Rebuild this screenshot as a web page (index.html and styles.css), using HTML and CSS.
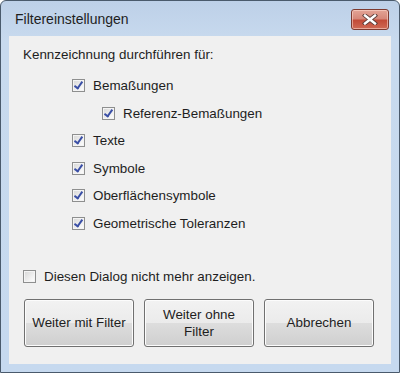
FILE: index.html
```html
<!DOCTYPE html>
<html lang="de">
<head>
    <meta charset="UTF-8">
    <title>Filtereinstellungen</title>
    <link rel="stylesheet" href="styles.css">
</head>
<body>
    <div class="window">
        <div class="titlebar">
            <span class="title">Filtereinstellungen</span>
            <button class="close" type="button">
                <svg width="16" height="11" viewBox="0 0 16 11">
                    <path d="M3 1.5 L13 9.5 M13 1.5 L3 9.5" stroke="#5a3c38" stroke-width="4.2" stroke-linecap="square" fill="none"/>
                    <path d="M3 1.5 L13 9.5 M13 1.5 L3 9.5" stroke="#ffffff" stroke-width="2.4" stroke-linecap="square" fill="none"/>
                </svg>
            </button>
        </div>
        <div class="client">
            <div class="heading">Kennzeichnung durchführen für:</div>
            <div class="options">
                <label class="row"><span class="box checked"></span>Bemaßungen</label>
                <label class="row sub"><span class="box checked"></span>Referenz-Bemaßungen</label>
                <label class="row"><span class="box checked"></span>Texte</label>
                <label class="row"><span class="box checked"></span>Symbole</label>
                <label class="row"><span class="box checked"></span>Oberflächensymbole</label>
                <label class="row"><span class="box checked"></span>Geometrische Toleranzen</label>
            </div>
            <label class="row dont-show"><span class="box"></span>Diesen Dialog nicht mehr anzeigen.</label>
            <div class="buttons">
                <button class="btn" type="button">Weiter mit Filter</button>
                <button class="btn" type="button">Weiter ohne<br>Filter</button>
                <button class="btn" type="button">Abbrechen</button>
            </div>
        </div>
    </div>
</body>
</html>
```

FILE: styles.css
```css
body {
    margin: 0;
    background-color: #ffffff;
    font-family: 'Liberation Sans', Arial, sans-serif;
}
.window {
    width: 400px;
    height: 373px;
    box-sizing: border-box;
    border: 1px solid #4a5a6c;
    border-radius: 6px 6px 0 0;
    background: linear-gradient(to bottom, #bdd0e8 0px, #c8daee 40px, #c6d9ef 100%);
    padding: 0 8px 8px 8px;
    display: flex;
    flex-direction: column;
}
.titlebar {
    height: 35px;
    display: flex;
    align-items: center;
    justify-content: space-between;
    padding: 0 2px 0 6px;
}
.title {
    font-size: 14px;
    color: #1e1e1e;
}
.close {
    width: 38px;
    height: 21px;
    margin-top: 1px;
    padding: 0;
    border: 1px solid #7d3a30;
    border-radius: 3px;
    background: linear-gradient(to bottom, #e3a496 0%, #d6887a 45%, #c24b38 55%, #cf6a55 100%);
    box-shadow: inset 0 0 0 1px rgba(255, 220, 210, 0.55);
    display: flex;
    align-items: center;
    justify-content: center;
}
.client {
    flex: 1;
    background-color: #f0f0f0;
    padding: 11px 14px 0 14px;
    font-size: 13.4px;
    color: #1e1e1e;
}
.heading {
    height: 16px;
    line-height: 16px;
}
.options {
    margin-top: 9px;
    padding-left: 49px;
}
.row {
    display: flex;
    align-items: center;
    height: 27.5px;
}
.row.sub {
    padding-left: 30px;
}
.box {
    width: 11px;
    height: 11px;
    border: 1px solid #8e8f8f;
    background: linear-gradient(135deg, #d6d6d6 0%, #f4f4f4 70%, #ffffff 100%);
    box-shadow: inset 0 0 0 1px #f4f4f4;
    margin-right: 8px;
    flex-shrink: 0;
    position: relative;
}
.box.checked::after {
    content: '';
    position: absolute;
    left: 3px;
    top: 0px;
    width: 3px;
    height: 7px;
    border: solid #3a4fa6;
    border-width: 0 2px 2px 0;
    transform: rotate(35deg);
}
.dont-show {
    margin-top: 26px;
}
.buttons {
    display: flex;
    gap: 10px;
    margin-top: 8px;
    padding-left: 1px;
}
.btn {
    width: 110px;
    height: 48px;
    border: 1px solid #707070;
    border-radius: 3px;
    background: linear-gradient(to bottom, #f2f2f2 0%, #ebebeb 50%, #dddddd 51%, #cfcfcf 100%);
    box-shadow: inset 0 0 0 1px #fcfcfc;
    font-family: 'Liberation Sans', Arial, sans-serif;
    font-size: 13.4px;
    color: #1e1e1e;
    line-height: 17px;
    padding: 0;
}
```
